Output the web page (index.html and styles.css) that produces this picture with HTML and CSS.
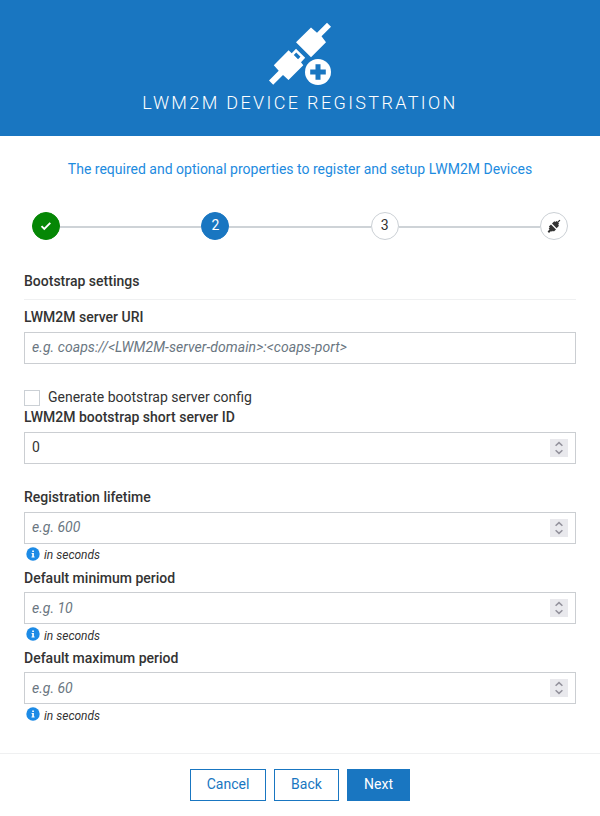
FILE: index.html
```html
<!DOCTYPE html>
<html lang="en">
<head>
<meta charset="utf-8">
<title>LWM2M device registration</title>
<link rel="stylesheet" href="styles.css">
</head>
<body>
<svg class="defs" width="0" height="0">
  <symbol id="info" viewBox="0 0 14 14"><circle cx="7" cy="7" r="6.7" fill="#1d8be6"/><path d="M6.2 3.4h1.7v1.7H6.2zM5.6 6h2.3v3.5h.7v1H5.5v-1h.7V7h-.6z" fill="#fff"/></symbol>
  <symbol id="spin" viewBox="0 0 18 18"><path d="M5.6 6.8 9 3.6l3.4 3.2M5.6 11.2 9 14.4l3.4-3.2" fill="none" stroke="#92919b" stroke-width="1.5"/></symbol>
</svg>
<header class="header">
  <svg class="logo" width="64" height="64" viewBox="268 22 64 64" fill="#fff">
    <path d="M327 22.7 331 26.7 321.5 36.3 326 42.3 311 57.2 296 42.3 311 27.6 317 32.7z"/>
    <path fill-rule="evenodd" d="M269 80.5 278.7 70.8 273.8 65.3 288.6 50.3 291.7 53.3 296 48.8 305.2 57.7 301 62.3 303.3 65.3 288.5 80 283 75 273.2 84.7zM296.2 52.4 293.8 54.9 298 59.2 300.5 56.7z"/>
    <circle cx="318" cy="72" r="13"/>
    <path d="M315.5 64.2h5v5.3h5.3v5h-5.3v5.3h-5v-5.3h-5.3v-5h5.3z" fill="#1976c1"/>
  </svg>
  <h1>LWM2M DEVICE REGISTRATION</h1>
</header>
<main>
  <p class="intro">The required and optional properties to register and setup LWM2M Devices</p>
  <div class="steps">
    <span class="step done"><svg width="14" height="14" viewBox="0 0 14 14"><path d="m2.5 7.1 2.8 2.8 6-6" fill="none" stroke="#fff" stroke-width="1.9"/></svg></span>
    <i class="line"></i><span class="step active">2</span>
    <i class="line"></i><span class="step">3</span>
    <i class="line"></i><span class="step"><svg width="14" height="14" viewBox="0 0 14 14" fill="#333"><path d="m.6 12.400 1.900-1.900-.8-.9 1-1-.8-1L4 5.500l5 5L6.900 12.600l-1-.8-1 1-.9-.8-2 1.900zM5 4.500 7.300 2.200l1 .8 1.100-1 .9.800L12.500.7l.9.900-2.200 2.200.9.900-1 1.100.9 1L9.600 9.200z"/></svg></span>
  </div>
  <h2>Bootstrap settings</h2>
  <div class="field">
    <label>LWM2M server URI</label>
    <div class="input"><em class="uri">e.g. coaps://&lt;LWM2M-server-domain&gt;:&lt;coaps-port&gt;</em></div>
  </div>
  <div class="check"><span class="box"></span>Generate bootstrap server config</div>
  <div class="field">
    <label>LWM2M bootstrap short server ID</label>
    <div class="input"><span>0</span><svg class="spin"><use href="#spin"/></svg></div>
  </div>
  <div class="field spaced">
    <label>Registration lifetime</label>
    <div class="input"><em>e.g. 600</em><svg class="spin"><use href="#spin"/></svg></div>
    <div class="help"><svg><use href="#info"/></svg><span>in seconds</span></div>
  </div>
  <div class="field low">
    <label>Default minimum period</label>
    <div class="input"><em>e.g. 10</em><svg class="spin"><use href="#spin"/></svg></div>
    <div class="help"><svg><use href="#info"/></svg><span>in seconds</span></div>
  </div>
  <div class="field low">
    <label>Default maximum period</label>
    <div class="input"><em>e.g. 60</em><svg class="spin"><use href="#spin"/></svg></div>
    <div class="help"><svg><use href="#info"/></svg><span>in seconds</span></div>
  </div>
</main>
<footer>
  <button class="cancel">Cancel</button><button class="back">Back</button><button class="next">Next</button>
</footer>
</body>
</html>
```
FILE: styles.css
```css
* { box-sizing: border-box; }
body { margin: 0; background: #fff; color: #333; font: 14px/20px Roboto, sans-serif; }
.defs { position: absolute; }
.header { height: 136px; padding-top: 22px; background: #1976c1; color: #fff; text-align: center; }
.logo { display: block; margin: 0 auto; }
h1 { margin: 5px 0 0; font-size: 18px; line-height: 24px; font-weight: 300; letter-spacing: 2.36px; }
main { height: 617px; padding: 23px 24px 0; }
.intro { margin: 0; color: #1d8be0; text-align: center; }
.steps { display: flex; align-items: center; margin: 33px 8px 0; height: 28px; }
.step { display: flex; align-items: center; justify-content: center; width: 28px; height: 28px; border: 1px solid #cbd0d5; border-radius: 50%; background: #fff; line-height: 20px; padding-bottom: 2px; }
.step svg { margin-top: 2px; }
.done { background: #058705; border-color: #058705; }
.active { background: #1976c1; border-color: #1976c1; color: #fff; }
.line { flex: 1; height: 2px; margin-top: 2px; background: #ced3d7; }
h2 { margin: 31px 0 7px; height: 29px; border-bottom: 1px solid #eff0f1; font-size: 14px; line-height: 20px; font-weight: 500; }
label { display: block; height: 25px; font-weight: 500; }
.input { display: flex; align-items: center; justify-content: space-between; height: 32px; padding: 0 7px 2px; border: 1px solid #cbced2; }
.input em { color: #6a7681; }
.input .uri { letter-spacing: .06px; }
.spin { width: 18px; height: 18px; margin-top: 2px; background: #e9e9ed; }
.check { display: flex; align-items: center; height: 20px; margin: 23px 0 0; }
.box { width: 16px; height: 16px; margin: 2px 8px 0 0; border: 1px solid #cbd0d5; }
.spaced { margin-top: 23px; }
.help { display: flex; align-items: center; height: 24px; padding-left: 2px; font-size: 12px; font-style: italic; }
.help svg { width: 14px; height: 14px; margin: -4px 4px 0 0; }
.help span { margin-top: -1px; }
.spaced .help span { margin-top: -3px; }
.low label { height: 24px; }
.low em { margin-top: 2px; }
footer { display: flex; justify-content: center; gap: 8px; height: 63px; padding-top: 15px; border-top: 1px solid #eff0f1; }
button { height: 32px; padding: 0 0 2px; border: 1px solid #1976c1; background: #fff; color: #1976c1; font: 14px Roboto, sans-serif; }
.cancel { width: 76px; }
.back { width: 65px; }
.next { width: 63px; background: #1976c1; color: #fff; }
```
